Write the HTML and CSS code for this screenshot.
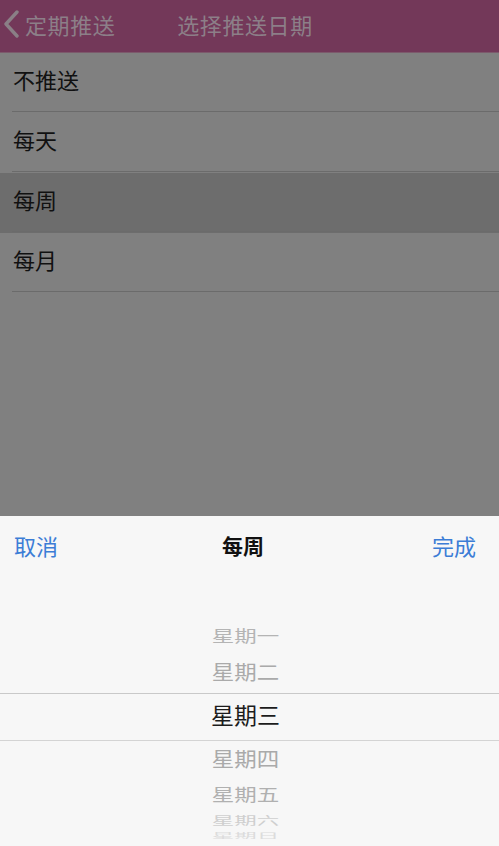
FILE: index.html
```html
<!DOCTYPE html>
<html>
<head>
    <meta charset="utf-8">
    <title>选择推送日期</title>
    <link rel="stylesheet" href="styles.css">
</head>
<body>
    <div class="screen">
        <div class="navbar">
            <div class="nav-back">
                <svg class="chevron" width="17" height="28" viewBox="0 0 17 28">
                    <polyline points="14,2 3,14 14,26" fill="none" stroke="#8a7f86" stroke-width="3.4" stroke-linecap="round" stroke-linejoin="round"/>
                </svg>
                <span>定期推送</span>
            </div>
            <div class="nav-title">选择推送日期</div>
            <div></div>
        </div>

        <div class="list">
            <div class="row"><div class="row-inner">不推送</div></div>
            <div class="row"><div class="row-inner">每天</div></div>
            <div class="row selected"><div class="row-inner">每周</div></div>
            <div class="row"><div class="row-inner">每月</div></div>
        </div>

        <div class="sheet">
            <div class="toolbar">
                <span class="tool-btn">取消</span>
                <span class="tool-title">每周</span>
                <span class="tool-btn">完成</span>
            </div>
            <div class="wheel">
                <div class="item i1"><span>星期一</span></div>
                <div class="item i2"><span>星期二</span></div>
                <div class="item current"><span>星期三</span></div>
                <div class="item i4"><span>星期四</span></div>
                <div class="item i5"><span>星期五</span></div>
                <div class="item i6"><span>星期六</span></div>
                <div class="item i7"><span>星期日</span></div>
            </div>
        </div>
    </div>
</body>
</html>
```

FILE: styles.css
```css
html, body {
    margin: 0;
    padding: 0;
    height: 100%;
}
body {
    font-family: "Noto Sans CJK SC", "Noto Sans", sans-serif;
    background: #808080;
    overflow: hidden;
}
.screen {
    height: 846px;
    display: flex;
    flex-direction: column;
}
.navbar {
    height: 53px;
    background: #733859;
    border-bottom: 1px solid #7c5a6c;
    display: grid;
    grid-template-columns: 1fr auto 1fr;
    align-items: center;
    color: #8c7f88;
    font-size: 22px;
    letter-spacing: 0.6px;
    padding: 0 9px 5px 0;
    box-sizing: border-box;
}
.nav-back {
    display: flex;
    align-items: center;
    gap: 5px;
    padding-left: 3px;
}
.nav-back span {
    line-height: 1;
}
.nav-title {
    line-height: 1;
}
.list {
    flex: 1;
}
.row {
    height: 60px;
    padding-left: 12px;
}
.row.selected {
    background: #6d6d6d;
}
.row-inner {
    height: 59px;
    box-sizing: border-box;
    padding-bottom: 6px;
    border-bottom: 1px solid #6b6b6b;
    display: flex;
    align-items: center;
    font-size: 22px;
    line-height: 1;
    color: #111;
    padding-left: 1px;
}
.sheet {
    height: 330px;
    background: #f7f7f7;
    display: flex;
    flex-direction: column;
    overflow: hidden;
}
.toolbar {
    height: 62px;
    display: flex;
    justify-content: space-between;
    align-items: center;
    padding: 0 23px 4px 14px;
    box-sizing: border-box;
}
.tool-btn {
    font-size: 22px;
    color: #3c7dd6;
    line-height: 1;
}
.tool-title {
    font-size: 21px;
    font-weight: bold;
    color: #111;
    line-height: 1;
    margin-right: 4px;
}
.wheel {
    padding-top: 44px;
    display: flex;
    flex-direction: column;
}
.item {
    display: flex;
    justify-content: center;
    align-items: center;
    font-size: 22.5px;
    line-height: 1;
    color: #aaa;
    overflow: hidden;
}
.item span {
    display: block;
    margin-right: 8px;
}
.i1 { height: 30px; color: #b4b4b4; }
.i1 span { transform: translateY(-2px) scaleY(0.72); }
.i2 { height: 41px; }
.i2 span { transform: translateY(-1px) scaleY(0.9); }
.current {
    height: 46px;
    border-top: 1px solid #c9c9c9;
    border-bottom: 1px solid #d4d4d4;
    color: #1c1c1c;
    font-size: 23px;
}
.current span { transform: translateY(-3px); }
.i4 { height: 38px; }
.i4 span { transform: translateY(-2px) scaleY(0.92); }
.i5 { height: 33px; color: #b0b0b0; }
.i5 span { transform: translateY(-2px) scaleY(0.78); }
.i6 { height: 20px; color: #cfcfcf; }
.i6 span { transform: translateY(-2px) scaleY(0.5); }
.i7 { height: 14px; color: #dcdcdc; align-items: flex-start; }
.i7 span { transform: scaleY(0.28); transform-origin: top; }
```
